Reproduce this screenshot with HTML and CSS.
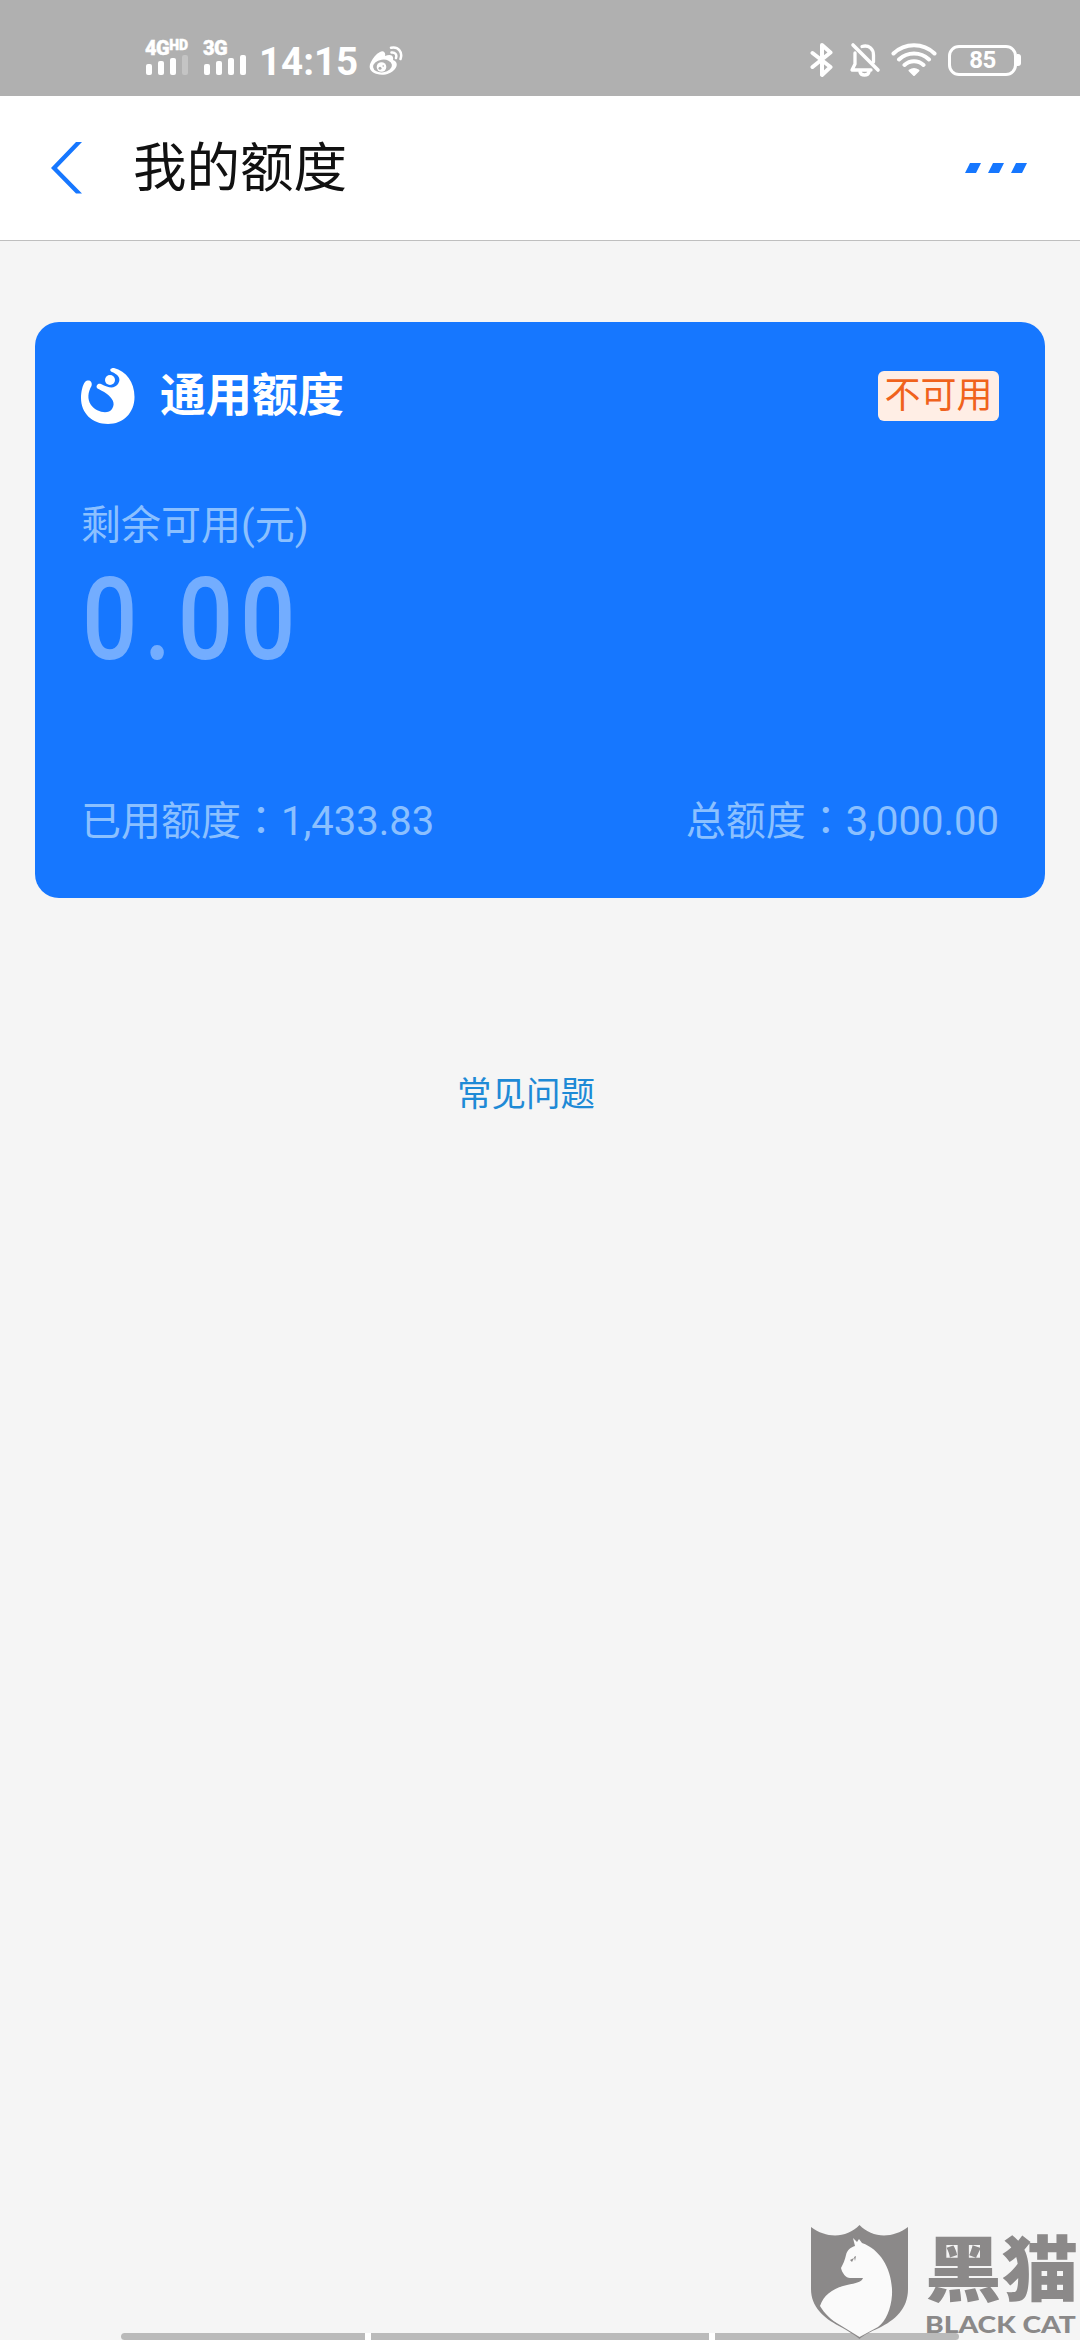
FILE: index.html
```html
<!DOCTYPE html>
<html lang="zh-CN">
<head>
    <meta charset="UTF-8">
    <title>我的额度</title>
    <link rel="stylesheet" href="styles.css">
</head>
<body>
    <div class="status-bar">
        <div class="status-left">
            <div class="signal signal-4g">
                <div class="signal-name">4G<sup>HD</sup></div>
                <svg width="44" height="20" viewBox="0 0 44 20" fill="#fff">
                    <rect x="0" y="9" width="6" height="11" rx="2"/>
                    <rect x="12" y="6" width="6" height="14" rx="2"/>
                    <rect x="24" y="3" width="6" height="17" rx="2"/>
                    <rect x="36" y="0" width="6" height="20" rx="2" opacity=".25"/>
                </svg>
            </div>
            <div class="signal signal-3g">
                <div class="signal-name">3G</div>
                <svg width="44" height="20" viewBox="0 0 44 20" fill="#fff">
                    <rect x="0" y="9" width="6" height="11" rx="2"/>
                    <rect x="12" y="6" width="6" height="14" rx="2"/>
                    <rect x="24" y="3" width="6" height="17" rx="2"/>
                    <rect x="36" y="0" width="6" height="20" rx="2"/>
                </svg>
            </div>
            <div class="time">14:15</div>
            <svg class="weibo" width="34" height="30" viewBox="0 0 34 30" fill="none">
                <path d="M11 6C14 4 17 6 16 10C21 8 25 9 24 14C28 15 29 19 26 23C22 28 14 30 8 28C1 26-1 21 2 16C4 12 7 8 11 6Z" fill="#fff"/>
                <ellipse cx="13.5" cy="20" rx="9.5" ry="6.3" transform="rotate(-8 13.5 20)" fill="#b0b0b0"/>
                <circle cx="12.5" cy="21" r="4.8" fill="#fff"/>
                <circle cx="11" cy="22.200" r="1.5" fill="#b0b0b0"/>
                <circle cx="14.2" cy="20" r=".8" fill="#b0b0b0"/>
                <path d="M22 1.8C29 0 34 6 31.5 13M22.5 6.5C26 6 28.2 8.5 27 12" stroke="#fff" stroke-width="2.5" stroke-linecap="round"/>
            </svg>
        </div>
        <div class="status-right">
            <svg width="24" height="36" viewBox="0 0 24 36" fill="none" stroke="#fff" stroke-width="4" stroke-linejoin="round" stroke-linecap="round">
                <path d="M2.5 11L20.5 25L12 33V3L20.5 10.5L2.5 25"/>
            </svg>
            <svg class="bell" width="32" height="36" viewBox="0 0 32 36" fill="none" stroke="#fff" stroke-width="3.3" stroke-linecap="round" stroke-linejoin="round">
                <path d="M13 4.5C20 2.5 24.5 7 24.5 13V20M6 11V22L3 28H22M11 30C12 34 19 34 20 30"/>
                <path d="M4 3L29 28" stroke-width="3.6"/>
            </svg>
            <svg class="wifi" width="46" height="34" viewBox="0 0 46 34" fill="none" stroke="#fff" stroke-width="4" stroke-linecap="round">
                <path d="M2.5 10.5C14-.5 32-.5 43.5 10.5M8 16.5C16.5 8.5 29.5 8.5 38 16.5M13.5 22C19 17 27 17 32.5 22"/>
                <path d="M18.5 27.5C21.5 25.5 24.5 25.5 27.5 27.5L23 32Z" fill="#fff" stroke-width="2" stroke-linejoin="round"/>
            </svg>
            <div class="battery">85</div>
            <div class="battery-tip"></div>
        </div>
    </div>

    <div class="nav-bar">
        <svg class="back" width="32" height="52" viewBox="0 0 32 52" fill="#1677ff">
            <path d="M25 0H31L6 26L31 51.5H25L0 26Z"/>
        </svg>
        <h1>我的额度</h1>
        <svg class="more" width="62" height="10" viewBox="0 0 62 10" fill="#1677ff">
            <path d="M5 0H16L11 10H0ZM28 0H39L34 10H23ZM51 0H62L57 10H46Z"/>
        </svg>
    </div>

    <div class="card">
        <div class="card-header">
            <svg width="54" height="56" viewBox="0 0 54 56">
                <path d="M33 0C45 3 53.5 14 53.5 29C53.5 45 42 56 27 56C11 56 0 45 0 30C0 24 1.500 17 4 14C7 11 12 13 10.5 18C7 24 6 31 10 37C15 44 27 47 31 41C35 35 31 30 26 26C22 23 19 22 16.5 20.500C14 18 17 14.500 20 16C28 20 33 21 37 16C41 10 36 6 31 4C28 2.500 29 0 33 0Z" fill="#fff"/>
                <circle cx="29" cy="12" r="5" fill="#fff"/>
            </svg>
            <h2>通用额度</h2>
            <span class="badge">不可用</span>
        </div>
        <div class="label">剩余可用(元)</div>
        <div class="amount">0.00</div>
        <div class="card-footer">
            <span>已用额度<span class="colon" lang="zh-TW">：</span>1,433.83</span>
            <span>总额度<span class="colon" lang="zh-TW">：</span>3,000.00</span>
        </div>
    </div>

    <a class="faq">常见问题</a>

    <div class="bottom-bar">
        <div></div>
        <div></div>
        <div></div>
    </div>

    <div class="watermark">
        <svg width="97" height="114" viewBox="0 0 97 114">
            <path d="M0 2C16 14 36 13 48.5 0C61 13 81 14 97 2V64C97 84 84 95 68 103C59 107 53 110 48.5 114C44 110 37 106 28 101C13 93 0 82 0 64Z" fill="#8b8989"/>
            <path d="M42 13L46 17L48 14L51 18C71 25 82 47 81 70C80 84 75 96 67 102L48.5 112L29 100C20 95 13 88 9 81C13 69 23 63 36 60C45 58 51 57 52 53H39C35 53 31 48 30 43C32 39 34 35 35 30C36 25 40 22 44 21Z" fill="#fafafa"/>
            <path d="M39 35L43 33L41 37ZM43 32L45 31L44 36Z" fill="#8b8989"/>
        </svg>
        <div class="watermark-text">
            <div class="watermark-cn">黑猫</div>
            <div class="watermark-en">BLACK CAT</div>
        </div>
    </div>
</body>
</html>
```
FILE: styles.css
```css
* {
    box-sizing: border-box;
}
body {
    margin: 0;
    height: 2340px;
    background: #f5f5f5;
    font-family: Roboto, "Noto Sans CJK SC", sans-serif;
    position: relative;
    overflow: hidden;
}
h1, h2 {
    margin: 0;
}
svg {
    display: block;
    flex: none;
}
.status-bar {
    height: 96px;
    background: #b0b0b0;
    color: #fff;
    display: flex;
    justify-content: space-between;
    padding: 0 59px 0 145px;
}
.status-left {
    display: flex;
    align-items: flex-start;
}
.signal {
    width: 58px;
    padding-top: 38px;
}
.signal svg {
    margin: 17px 0 0 1px;
}
.signal-name {
    height: 0;
    font-size: 20px;
    line-height: 20px;
    font-weight: 900;
    letter-spacing: -0.5px;
    white-space: nowrap;
    -webkit-text-stroke: 0.4px #fff;
}
.signal-name sup {
    font-size: 14px;
    line-height: 0;
    letter-spacing: 0;
    vertical-align: 5px;
}
.time {
    width: 112px;
    margin: 39px 0 0 -2px;
    font-size: 38.5px;
    line-height: 46px;
    font-weight: bold;
}
.weibo {
    margin: 46px 0 0 -2px;
}
.status-right {
    display: flex;
    align-items: center;
    height: 120px;
}
.bell {
    margin-left: 15px;
}
.wifi {
    margin-left: 10px;
}
.battery {
    width: 69px;
    height: 31px;
    margin-left: 11px;
    border: 3px solid #fff;
    border-radius: 11px;
    font-size: 24px;
    line-height: 25px;
    font-weight: bold;
    letter-spacing: -0.5px;
    text-align: center;
}
.battery-tip {
    width: 4px;
    height: 12px;
    background: #fff;
    border-radius: 0 3px 3px 0;
}
.nav-bar {
    height: 145px;
    background: #fff;
    border-bottom: 1px solid #bfbfbf;
    display: flex;
    align-items: center;
    padding: 0 53px 0 51px;
}
.nav-bar h1 {
    margin-left: 50px;
    padding-top: 2px;
    color: #111;
    font-size: 53.5px;
    line-height: 80px;
    font-weight: normal;
}
.more {
    margin-left: auto;
}
.card {
    height: 576px;
    margin: 81px 35px 0;
    padding: 46px 46px 0;
    background: #1677ff;
    border-radius: 24px;
    color: #8bc0ff;
}
.card-header {
    display: flex;
    align-items: center;
    height: 56px;
}
.card-header h2 {
    margin-left: 25px;
    padding-bottom: 3px;
    color: #fff;
    font-size: 46px;
    line-height: 56px;
    font-weight: bold;
}
.badge {
    width: 121px;
    height: 50px;
    margin-left: auto;
    background: #ffeee5;
    border-radius: 6px;
    color: #f0621c;
    font-size: 36px;
    line-height: 50px;
    text-align: center;
}
.label {
    margin-top: 72px;
    font-size: 40px;
    line-height: 60px;
}
.amount {
    height: 110px;
    margin: 9px 0 0 1px;
    color: #73adff;
    font-size: 115px;
    line-height: 110px;
    font-weight: 500;
    letter-spacing: 7.7px;
    transform: scaleX(0.85);
    transform-origin: left;
}
.card-footer {
    display: flex;
    justify-content: space-between;
    margin-top: 117px;
    font-size: 40px;
    line-height: 60px;
}
.colon {
    font-family: "Noto Sans CJK TC", sans-serif;
    line-height: 1;
}
.faq {
    display: block;
    width: 1052px;
    margin-top: 168px;
    color: #1e8ad6;
    font-size: 34.5px;
    line-height: 56px;
    text-align: center;
}
.bottom-bar {
    position: absolute;
    left: 121px;
    bottom: 0;
    width: 838px;
    height: 7px;
    display: grid;
    grid-template-columns: 244px 338px 244px;
    gap: 6px;
    background: #fff;
    border-radius: 4px;
    overflow: hidden;
}
.bottom-bar div {
    background: #bababa;
}
.watermark {
    position: absolute;
    left: 811px;
    bottom: 1px;
    display: flex;
    gap: 17px;
    color: #8b8989;
}
.watermark-text {
    width: 155px;
    white-space: nowrap;
}
.watermark-cn {
    height: 84px;
    font-family: "Noto Sans CJK SC", sans-serif;
    font-size: 71px;
    line-height: 78px;
    font-weight: 900;
    transform: scaleX(1.08);
    transform-origin: left;
}
.watermark-en {
    font-family: Lato, sans-serif;
    font-size: 23.5px;
    line-height: 30px;
    font-weight: 900;
    transform: scaleX(1.2);
    transform-origin: left;
}
```
